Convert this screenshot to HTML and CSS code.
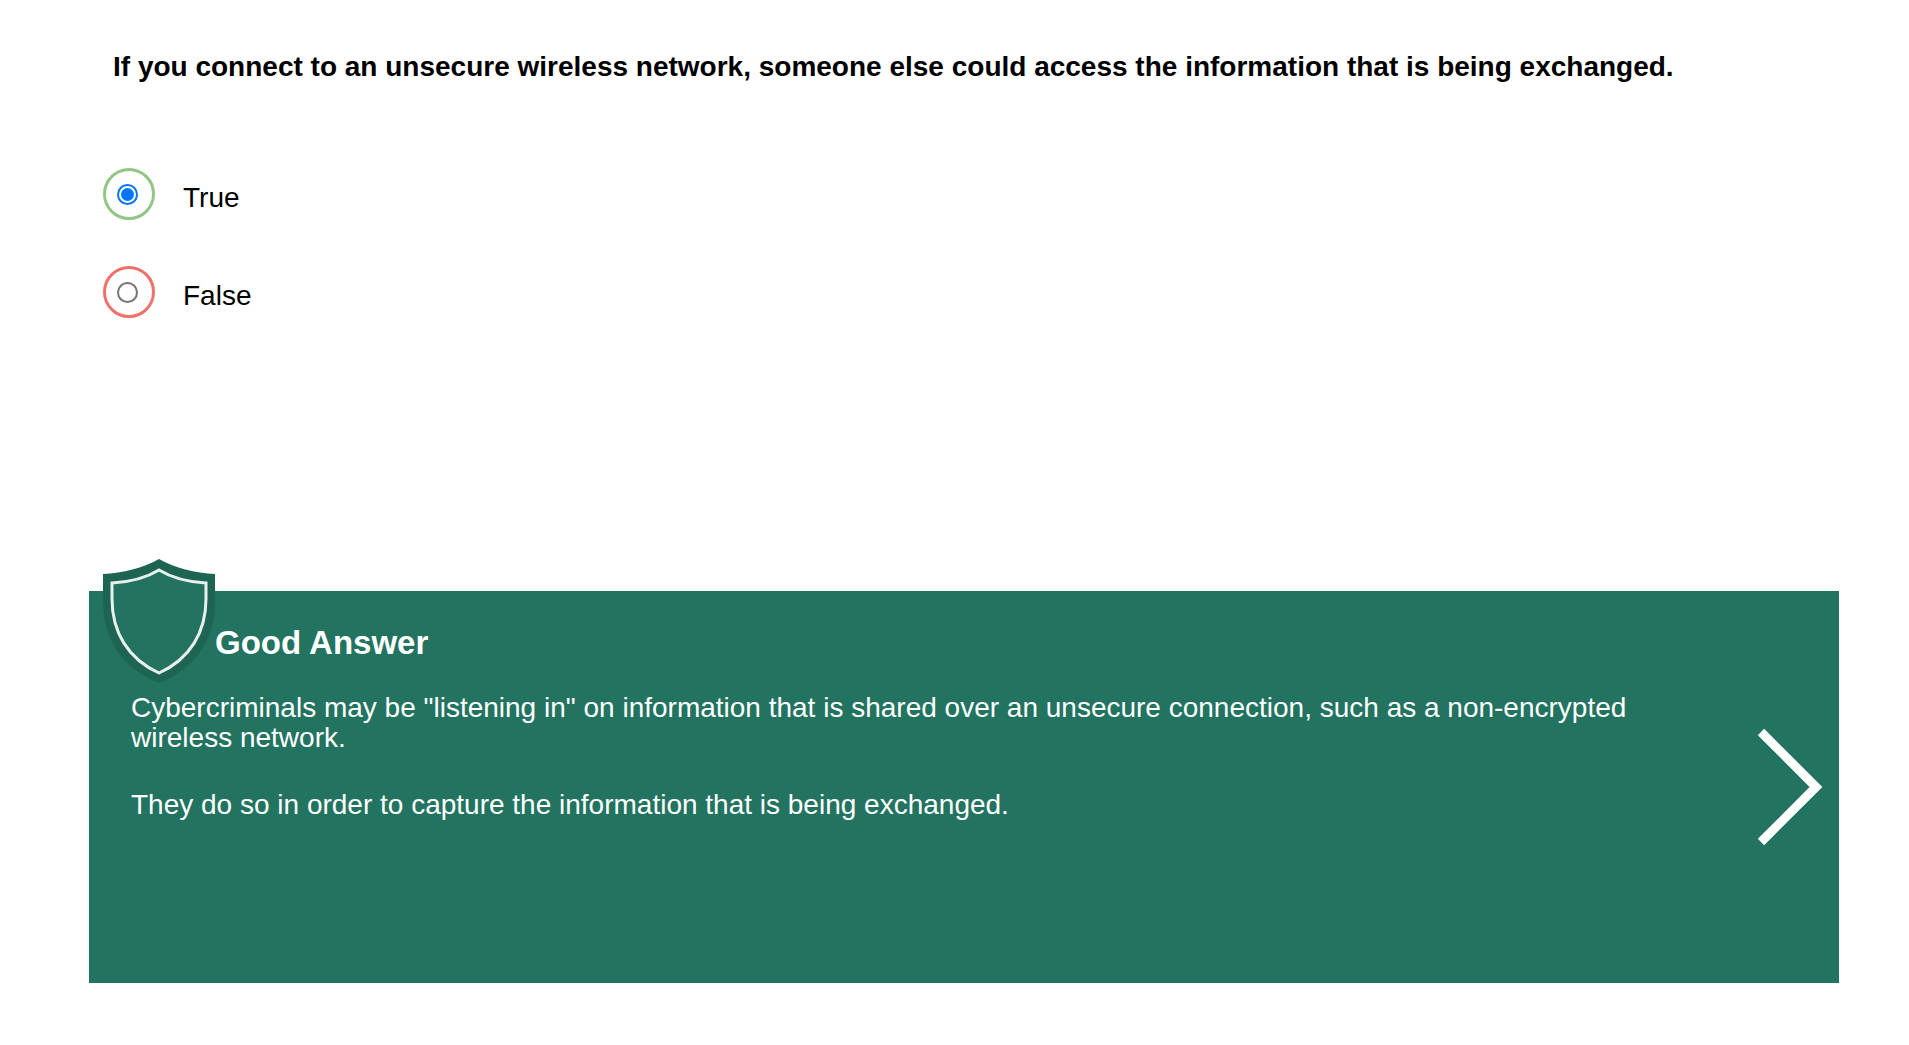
FILE: index.html
```html
<!DOCTYPE html>
<html lang="en">
<head>
<meta charset="utf-8">
<meta name="viewport" content="width=device-width, initial-scale=1">
<title>Wireless network quiz</title>
<link rel="stylesheet" href="styles.css">
</head>
<body>
<main class="quiz">
  <form class="question">
    <h1 class="question-text" id="question">If you connect to an unsecure wireless network, someone else could access the information that is being exchanged.</h1>
    <div class="options" role="radiogroup" aria-labelledby="question">
      <div class="option">
        <span class="ring ring-correct"><input class="radio" type="radio" name="answer" id="answer-true" checked></span>
        <label class="option-label" for="answer-true">True</label>
      </div>
      <div class="option">
        <span class="ring ring-wrong"><input class="radio" type="radio" name="answer" id="answer-false"></span>
        <label class="option-label" for="answer-false">False</label>
      </div>
    </div>
  </form>
  <section class="feedback">
    <svg class="shield" viewBox="0 0 114 124" aria-hidden="true">
      <path fill="#1e6452" d="M0 15C20 14 40 9 56 0C72 9 92 14 112 15V43C112 82 90 111 56 124C22 111 0 82 0 43Z"/>
      <path fill="#227360" stroke="#e9f1ef" stroke-width="3" d="M9 24C27 23 43 19 56 11C69 19 85 23 103 24V40C103 73 87 100 56 114C25 100 9 73 9 40Z"/>
    </svg>
    <div class="feedback-content">
      <h2 class="feedback-title">Good Answer</h2>
      <div class="feedback-body">
        <p>Cybercriminals may be "listening in" on information that is shared over an unsecure connection, such as a non-encrypted wireless network.</p>
        <p>They do so in order to capture the information that is being exchanged.</p>
      </div>
    </div>
    <button class="next" type="button" aria-label="Next">
      <svg class="next-icon" viewBox="0 0 66 118" aria-hidden="true">
        <path fill="none" stroke="#fff" stroke-width="9" d="M4 4L59 59L4 114"/>
      </svg>
    </button>
  </section>
</main>
</body>
</html>
```
FILE: styles.css
```css
* {
  box-sizing: border-box;
}

body {
  margin: 0;
  background: #fff;
  color: #000;
  font-family: "Liberation Sans", Arial, sans-serif;
  font-size: 28px;
  line-height: 30px;
}

h1, h2, p {
  margin: 0;
}

.quiz {
  display: flex;
  flex-direction: column;
  padding: 52px 70px 62px 89px;
}

.question {
  min-height: 539px;
}

.question-text {
  padding-left: 24px;
  font-size: 28px;
  line-height: 30px;
}

.options {
  display: flex;
  flex-direction: column;
  gap: 46px;
  padding: 86px 14px 0;
}

.option {
  display: flex;
  align-items: center;
  gap: 28px;
}

.ring {
  display: flex;
  align-items: center;
  width: 52px;
  height: 52px;
  padding-left: 11px;
  border: 3px solid;
  border-radius: 50%;
}

.ring-correct {
  border-color: #93c585;
}

.ring-wrong {
  border-color: #f0716c;
}

.radio {
  display: grid;
  place-items: center;
  width: 21px;
  height: 21px;
  margin: 0;
  appearance: none;
  border: 2px solid #767676;
  border-radius: 50%;
}

.radio:checked {
  border-color: #0075ff;
}

.radio:checked::before {
  content: "";
  width: 13px;
  height: 13px;
  border-radius: 50%;
  background: #0075ff;
}

.option-label {
  padding-top: 8px;
}

.feedback {
  position: relative;
  display: flex;
  align-items: center;
  justify-content: space-between;
  min-height: 392px;
  padding-right: 16px;
  background: #227360;
  color: #fff;
}

.shield {
  position: absolute;
  top: -32px;
  left: 14px;
  width: 114px;
  height: 124px;
}

.feedback-content {
  align-self: flex-start;
  max-width: 1580px;
  padding: 32px 0 32px 42px;
}

.feedback-title {
  padding-left: 84px;
  font-size: 33px;
  line-height: 40px;
}

.feedback-body {
  display: flex;
  flex-direction: column;
  gap: 37px;
  padding-top: 30px;
}

.next {
  display: flex;
  flex: none;
  margin-left: 24px;
  padding: 0;
  border: 0;
  background: none;
  cursor: pointer;
}

.next-icon {
  width: 66px;
  height: 118px;
}
```
